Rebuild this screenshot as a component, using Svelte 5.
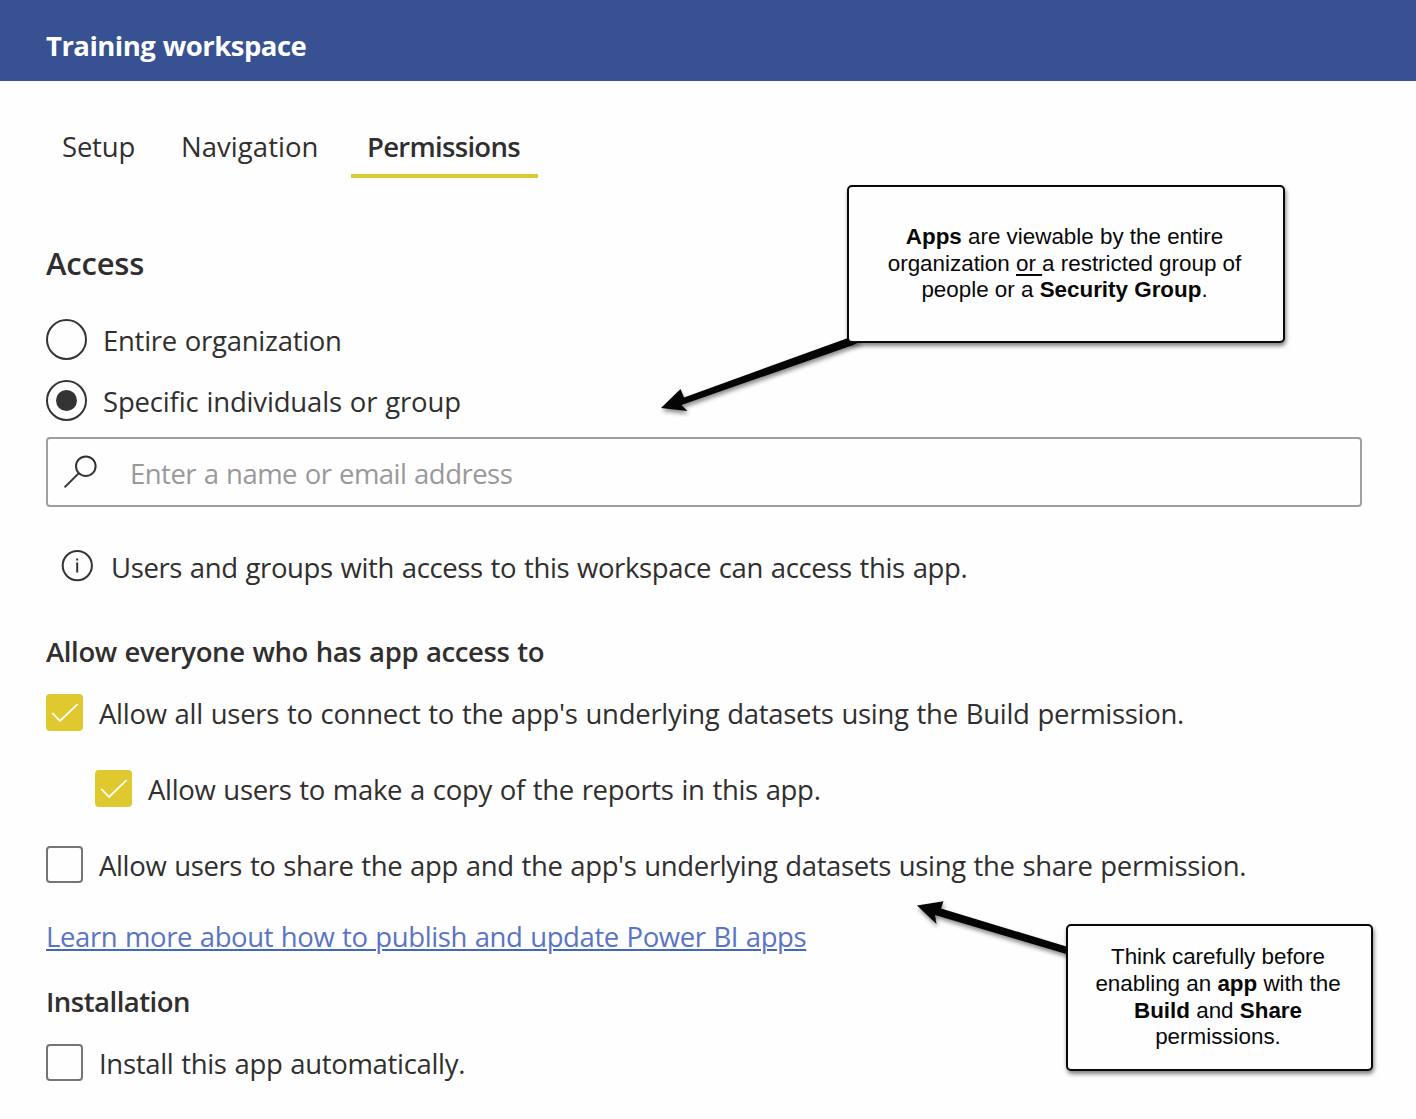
<script>
  let tab = $state('Permissions');
  let audience = $state('specific');
  let build = $state(true);
  let copy = $state(true);
  let share = $state(false);
  let install = $state(false);
</script>

{#snippet box(checked)}
  <span class="box" class:checked>
    {#if checked}
      <svg viewBox="0 0 37 37" aria-hidden="true"><path d="M6.2 18.8 14 27 31.6 10.2" /></svg>
    {/if}
  </span>
{/snippet}

<div class="page">
  <header><h1>Training workspace</h1></header>

  <main>
    <nav>
      <button class="tab setup" class:active={tab === 'Setup'} onclick={() => (tab = 'Setup')}>Setup</button>
      <button class="tab navigation" class:active={tab === 'Navigation'} onclick={() => (tab = 'Navigation')}>Navigation</button>
      <button class="tab permissions" class:active={tab === 'Permissions'} onclick={() => (tab = 'Permissions')}>Permissions</button>
    </nav>

    <h2 class="access">Access</h2>
    <div class="radios">
      <button class="option" onclick={() => (audience = 'all')}>
        <span class="radio" class:on={audience === 'all'}></span><span class="entire">Entire organization</span>
      </button>
      <button class="option" onclick={() => (audience = 'specific')}>
        <span class="radio" class:on={audience === 'specific'}></span><span class="specific">Specific individuals or group</span>
      </button>
    </div>

    <div class="search">
      <svg class="lens" viewBox="0 0 36 36" aria-hidden="true"><circle cx="22.8" cy="12.2" r="9.8" /><path d="M15.6 19.4 1.6 33.4" /></svg>
      <span class="placeholder">Enter a name or email address</span>
    </div>

    <div class="info">
      <svg viewBox="0 0 32 32" aria-hidden="true"><circle cx="16.3" cy="15.6" r="14.6" /><path d="M16.2 12.5V22.6M16.2 8.4V10.6" /></svg>
      <span>Users and groups with access to this workspace can access this app.</span>
    </div>

    <h3 class="allow">Allow everyone who has app access to</h3>
    <div class="checks">
      <button class="check" onclick={() => (build = !build)}>
        {@render box(build)}<span class="build">Allow all users to connect to the app's underlying datasets using the Build permission.</span>
      </button>
      <button class="check nested" onclick={() => (copy = !copy)}>
        {@render box(copy)}<span class="copy">Allow users to make a copy of the reports in this app.</span>
      </button>
      <button class="check" onclick={() => (share = !share)}>
        {@render box(share)}<span class="share">Allow users to share the app and the app's underlying datasets using the share permission.</span>
      </button>
    </div>

    <a class="learn" href="#learn">Learn more about how to publish and update Power BI apps</a>

    <h3 class="installation">Installation</h3>
    <button class="check" onclick={() => (install = !install)}>
      {@render box(install)}<span class="install">Install this app automatically.</span>
    </button>
  </main>

  <svg class="arrows" viewBox="0 0 1416 1119" aria-hidden="true">
    <path d="M661 408 680.5 389 684 397.5 848 338 862 341 852 345.5 681.5 405 687.5 411Z" />
    <path d="M917 905.6 943.5 901.2 941 908.5 1068 947 1068 954.5 935 915 936.5 924Z" />
  </svg>
  <aside class="callout viewers">
    <p><b>Apps</b> are viewable by the entire<br />organization <u>or&nbsp;</u>a restricted group of<br />people or a <b>Security Group</b>.</p>
  </aside>
  <aside class="callout caution">
    <p>Think carefully before<br />enabling an <b>app</b> with the<br /><b>Build</b> and <b>Share</b><br />permissions.</p>
  </aside>
</div>

<style>
  :global(body) {
    margin: 0;
    background: #fefefe;
  }
  .page {
    position: relative;
    width: 1416px;
    height: 1119px;
    overflow: hidden;
    background: #fefefe;
    color: #302f2e;
    font: 400 27.5px/40px 'Open Sans', 'Noto Sans', sans-serif;
    word-spacing: 1px;
  }
  .page * {
    box-sizing: border-box;
  }
  header {
    height: 81px;
    padding: 27px 46px 0;
    background: #385192;
    color: #fff;
  }
  h1, h2, h3, p {
    margin: 0;
  }
  h1, h3 {
    font-size: 27.5px;
    line-height: 38px;
    font-weight: 600;
    white-space: nowrap;
  }
  h1 {
    font-weight: 700;
    letter-spacing: -0.53px;
  }
  main {
    display: flex;
    flex-direction: column;
    align-items: flex-start;
    padding: 46px 54px 0 46px;
  }
  button {
    display: flex;
    margin: 0;
    padding: 0;
    border: 0;
    background: none;
    color: inherit;
    font: inherit;
    word-spacing: inherit;
    text-align: left;
    white-space: nowrap;
  }
  nav {
    display: flex;
    margin-left: -1px;
  }
  .tab {
    height: 51px;
    padding-left: 17px;
    border-bottom: 4px solid transparent;
  }
  .tab.setup {
    width: 119px;
    letter-spacing: -0.2px;
  }
  .tab.navigation,
  .tab.permissions {
    width: 187px;
  }
  .tab.navigation {
    letter-spacing: 0.05px;
  }
  .tab.permissions {
    padding-left: 16px;
    letter-spacing: -0.7px;
  }
  .tab.active {
    border-color: #dac934;
    font-weight: 600;
  }
  .access {
    margin-top: 64px;
    font-size: 31px;
    line-height: 42px;
    font-weight: 600;
    letter-spacing: -0.2px;
  }
  .radios {
    display: grid;
    gap: 20px;
    margin-top: 35px;
  }
  .option {
    height: 41px;
    gap: 16px;
  }
  .option > span:last-child {
    padding-top: 2px;
  }
  .radio {
    display: grid;
    place-items: center;
    width: 41px;
    height: 41px;
    border: 2px solid #333;
    border-radius: 50%;
  }
  .radio.on::after {
    content: '';
    width: 21px;
    height: 21px;
    border-radius: 50%;
    background: #333;
  }
  .entire {
    letter-spacing: -0.27px;
  }
  .specific {
    letter-spacing: -0.17px;
  }
  .search {
    display: flex;
    align-items: center;
    align-self: stretch;
    height: 70px;
    margin-top: 16px;
    padding-left: 15px;
    border: 2px solid #9f9f9f;
    border-radius: 4px;
  }
  .lens {
    width: 36px;
    height: 36px;
    margin-right: 31px;
  }
  .placeholder {
    padding-top: 4px;
    color: #999;
    letter-spacing: -0.52px;
  }
  svg {
    fill: none;
    stroke: #333;
    stroke-width: 2;
  }
  .info {
    display: flex;
    height: 38px;
    margin: 41px 0 0 15px;
    gap: 18px;
    white-space: nowrap;
    letter-spacing: -0.37px;
  }
  .info svg {
    width: 32px;
    height: 32px;
    margin-top: 2px;
  }
  .allow {
    margin-top: 47px;
    letter-spacing: -0.38px;
  }
  .checks {
    display: grid;
    gap: 38px;
    margin-top: 23px;
  }
  .check {
    height: 38px;
    gap: 16px;
  }
  .nested {
    margin-left: 49px;
  }
  .box {
    width: 37px;
    height: 37px;
    border: 2px solid #757575;
    border-radius: 4px;
  }
  .box.checked {
    border: 0;
    background: #dfc92f;
  }
  .box svg {
    display: block;
    stroke: #fff;
    stroke-width: 1.8;
  }
  .build {
    letter-spacing: -0.285px;
  }
  .copy {
    letter-spacing: -0.32px;
  }
  .share {
    letter-spacing: -0.356px;
  }
  .install {
    letter-spacing: -0.32px;
  }
  .learn {
    margin-top: 33px;
    color: #5a74c4;
    letter-spacing: -0.4px;
    text-decoration: underline;
    text-decoration-color: #4468b8;
    text-decoration-thickness: 2px;
    text-underline-offset: 2px;
    white-space: nowrap;
  }
  .installation {
    margin: 26px 0 23px;
    letter-spacing: -0.52px;
  }
  .arrows {
    position: absolute;
    inset: 0;
    width: 1416px;
    height: 1119px;
    pointer-events: none;
    filter: drop-shadow(1px 3px 2px rgba(0, 0, 0, 0.45));
  }
  .arrows path {
    fill: #050505;
    stroke: none;
  }
  .callout {
    position: absolute;
    display: flex;
    align-items: center;
    justify-content: center;
    padding-right: 3px;
    border: 2px solid #080808;
    border-radius: 5px;
    background: #fefefe;
    box-shadow: 1px 3px 4px rgba(0, 0, 0, 0.5);
    color: #080808;
    font: 22.4px/26.7px 'Liberation Sans', Arial, sans-serif;
    word-spacing: 0;
    text-align: center;
    white-space: nowrap;
  }
  .callout u {
    text-decoration-thickness: 1.5px;
    text-underline-offset: 3px;
  }
  .viewers {
    left: 847px;
    top: 185px;
    width: 438px;
    height: 158px;
  }
  .caution {
    left: 1066px;
    top: 924px;
    width: 307px;
    height: 147px;
  }
</style>
